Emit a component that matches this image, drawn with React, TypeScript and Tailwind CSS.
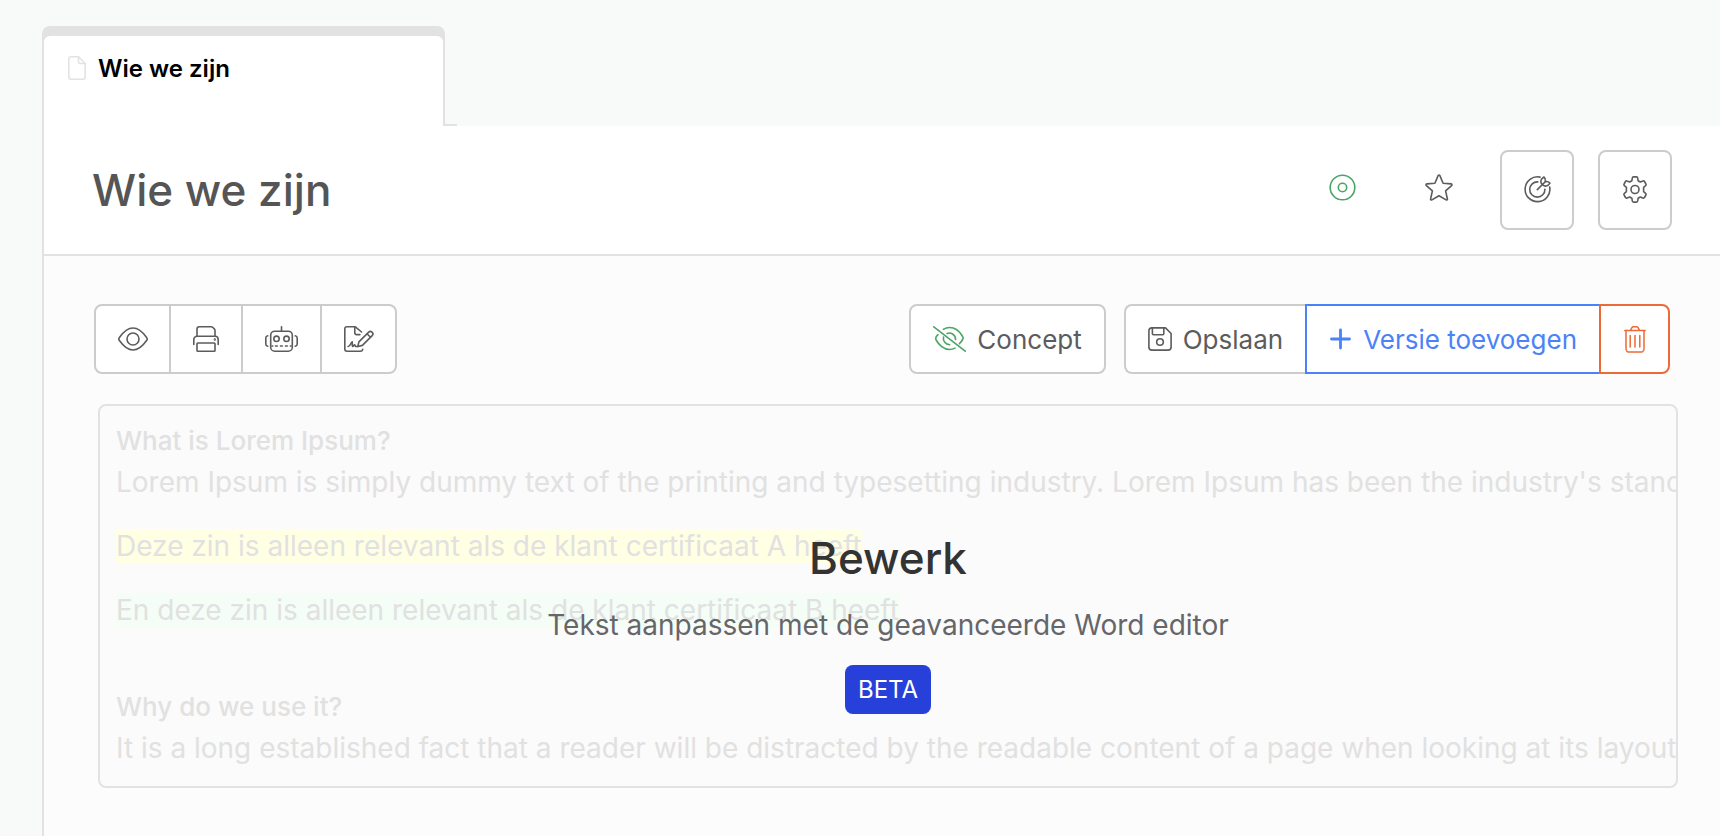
import type { ReactNode } from "react";
import { clsx } from "clsx";

type IconProps = {
  width: number;
  height: number;
  className?: string;
  strokeWidth?: number;
  children: ReactNode;
};

function Icon({ width, height, className, strokeWidth = 1.6, children }: IconProps) {
  return (
    <svg
      width={width}
      height={height}
      viewBox={`0 0 ${width} ${height}`}
      fill="none"
      stroke="currentColor"
      strokeWidth={strokeWidth}
      strokeLinecap="round"
      strokeLinejoin="round"
      className={clsx("shrink-0", className)}
      aria-hidden="true"
    >
      {children}
    </svg>
  );
}

function FileIcon() {
  return (
    <Icon width={18} height={24} className="text-[#e3e3e3]">
      <path d="M10.5.8H3A2.200 2.200 0 0 0 .8 3v18A2.200 2.200 0 0 0 3 23.200h12a2.200 2.200 0 0 0 2.200-2.200V7.500z" />
      <path d="M10.500.8V6A1.500 1.500 0 0 0 12 7.500h5.200" />
    </Icon>
  );
}

function StatusIcon() {
  return (
    <Icon width={27} height={27} className="text-[#4aa564]">
      <circle cx="13.5" cy="13.5" r="12.3" />
      <circle cx="13.5" cy="13.5" r="4.2" />
    </Icon>
  );
}

function StarIcon() {
  return (
    <Icon width={28} height={27}>
      <path d="M13.100 1.600c.4-.8 1.400-.8 1.800 0l3.200 7.600 7.900.7c.9.1 1.200 1.100.6 1.700l-6 5.300 1.800 8.100c.2.900-.6 1.300-1.300.9L14 21.700l-7.100 4.200c-.7.400-1.500-.1-1.300-.9l1.800-8.100-6-5.300c-.6-.6-.3-1.600.6-1.700l7.900-.7z" />
    </Icon>
  );
}

function GoalIcon() {
  return (
    <Icon width={27} height={27}>
      <path d="M16 1.100A12.400 12.400 0 1 0 25.700 11" />
      <path d="M13.800 5.900a7.600 7.600 0 1 0 7.100 7.300" />
      <path d="M13.300 13.600 21.500 5.500" />
      <path d="M18.300 8.400c-2.600-2.400-1.800-5.200 1.600-7.400 1.100.8 1.700 2.200 1.600 4.500" />
      <path d="M18.600 8.700c2.400 2.400 5.200 1.600 7.400-1.600-.8-1.200-2.200-1.700-4.500-1.600" />
    </Icon>
  );
}

function GearIcon() {
  return (
    <Icon width={26} height={27}>
      <circle cx="13" cy="13.5" r="4" />
      <path d="M11.500.9h3c.8 0 1.100.4 1.200 1.100l.4 2.700 2.200 1.300 2.600-1c.7-.3 1.300-.1 1.600.5l1.400 2.500c.4.6.3 1.200-.3 1.700l-2 1.700v4.200l2 1.700c.6.5.7 1.100.3 1.700l-1.400 2.500c-.3.6-.9.8-1.600.5l-2.600-1-2.200 1.300-.4 2.700c-.1.7-.4 1.100-1.200 1.100h-3c-.8 0-1.100-.4-1.200-1.100l-.4-2.700-2.200-1.300-2.600 1c-.7.3-1.300.1-1.600-.5L2.100 19c-.4-.6-.3-1.200.3-1.700l2-1.700v-4.200l-2-1.700C1.800 9.200 1.700 8.600 2.100 8l1.400-2.500c.3-.6.9-.8 1.600-.5l2.600 1 2.200-1.300.4-2.700c.1-.7.4-1.100 1.200-1.100z" />
    </Icon>
  );
}

function EyeIcon() {
  return (
    <Icon width={30} height={24}>
      <path d="M28.600 10.500c.7.9.7 2.100 0 3C26.200 16.900 21 23 15 23S3.800 16.900 1.400 13.500c-.7-.9-.7-2.100 0-3C3.800 7.100 9 1 15 1s11.200 6.100 13.600 9.500z" />
      <circle cx="15" cy="12" r="6" />
    </Icon>
  );
}

function PrintIcon() {
  return (
    <Icon width={26} height={26}>
      <path d="M4 10V3.100A2.300 2.300 0 0 1 6.300.8h11.900a2.500 2.500 0 0 1 1.700.7l1.400 1.400a2.500 2.500 0 0 1 .7 1.700V10" />
      <path d="M.8 18.500v-5A3.200 3.200 0 0 1 4 10.300h18a3.200 3.200 0 0 1 3.200 3.200v5" />
      <rect x="4" y="17" width="18" height="8.200" rx=".8" />
      <circle cx="21.800" cy="13.500" r=".4" fill="currentColor" />
    </Icon>
  );
}

function RobotIcon() {
  return (
    <Icon width={33} height={26}>
      <path d="M16.500.8V5" />
      <rect x="5.700" y="5.200" width="21.600" height="20" rx="4" />
      <circle cx="11.500" cy="12.800" r="2.700" />
      <circle cx="21.500" cy="12.800" r="2.700" />
      <path d="M7 20h.8M10.500 20h1.800M15.500 20h1.800M20.500 20h1.800M25.300 20h.8" />
      <path d="M2.700 9.800C1.400 10 .8 10.900.8 12v6c0 1.100.6 2 1.900 2.300M30.300 9.800c1.300.2 1.900 1.100 1.900 2.200v6c0 1.100-.6 2-1.900 2.300" />
    </Icon>
  );
}

function SignatureIcon() {
  return (
    <Icon width={30} height={26}>
      <path d="M17.500 6 11.700 1.100a1.400 1.400 0 0 0-.9-.3H3A2.200 2.200 0 0 0 .8 3v20A2.200 2.200 0 0 0 3 25.200h13.500c1.300 0 2-.8 2.200-1.900" />
      <path d="M10.800.8v6.100A1.700 1.700 0 0 0 12.500 8.600h3.400" />
      <path d="M4.200 20.500c2-.5 2.600-3.600 4-4.700.3 1.500-.3 3.700.4 4.700.7 0 1.200-1.700 2-1.700.6 0 .3 1.600 1.200 1.700h2" />
      <path d="m13.800 20.500 1.100-4.600L24.700 6.100a2.300 2.300 0 0 1 3.200 0l.3.300a2.300 2.300 0 0 1 0 3.200l-9.800 9.800zM23 7.800l3.500 3.500" />
    </Icon>
  );
}

function ConceptIcon() {
  return (
    <Icon width={33} height={26} className="text-[#4aa564]">
      <path d="m.8.8 31.400 24.400" />
      <path d="M10.300 3.400c1.900-1.200 4-1.900 6.200-1.900 6 0 10.900 5.100 13.200 9 .7 1 .7 2 0 3-.9 1.600-2.100 3.100-3.300 4.300" />
      <path d="M5 8.700C4.300 9.300 3.600 10.100 3.100 11c-.6 1-.6 2 0 3 2.300 4.200 7.400 9.500 13.400 9.500 1.900 0 3.700-.5 5.500-1.400" />
      <path d="M14 7.500c3.500-1.500 8.500.8 8.600 6M10.500 11c-.8 4 2 7.500 6.200 7.800" />
    </Icon>
  );
}

function SaveIcon() {
  return (
    <Icon width={24} height={24}>
      <path d="M4 .9h13.500l5.600 5.600V20a3.100 3.100 0 0 1-3.100 3.100H4A3.100 3.100 0 0 1 .9 20V4A3.100 3.100 0 0 1 4 .9z" />
      <path d="M4.400.9v5.900a1 1 0 0 0 1 1h9.400a1 1 0 0 0 1-1V.9" />
      <circle cx="12" cy="15" r="3.300" />
    </Icon>
  );
}

function PlusIcon() {
  return (
    <Icon width={22} height={22} strokeWidth={2.8}>
      <path d="M11.500 2v18M2.500 11h18" />
    </Icon>
  );
}

function TrashIcon() {
  return (
    <Icon width={22} height={27} strokeWidth={1.5}>
      <path d="M.8 4.500h20.400M6.500 4.300l1.300-2.500a2 2 0 0 1 1.700-1h3a2 2 0 0 1 1.700 1l1.300 2.500" />
      <path d="M2 4.500v18.200a3.400 3.400 0 0 0 3.400 3.400h11.200a3.400 3.400 0 0 0 3.400-3.400V4.500" />
      <path d="M6.200 9.500V21M11 9.500V21M15.800 9.500V21" />
    </Icon>
  );
}

const viewTools = [
  { label: "Bekijken", icon: <EyeIcon />, style: "w-[77px] rounded-l-lg" },
  { label: "Afdrukken", icon: <PrintIcon />, style: "-ml-0.5 w-[74px]" },
  { label: "Assistent", icon: <RobotIcon />, style: "-ml-0.5 w-[81px]" },
  { label: "Ondertekenen", icon: <SignatureIcon />, style: "-ml-0.5 w-[77px] rounded-r-lg" },
];

function PageTab() {
  return (
    <div className="flex items-end pl-[42px] pt-[26px]">
      <div className="h-[100px] w-[403px] rounded-t-lg border-x-2 border-[#e2e2e2] bg-[#e2e2e2] pt-[10px]">
        <a href="#" className="flex h-full gap-3 rounded-t-md bg-white pl-6 pt-[15px]">
          <span className="pt-[5px]">
            <FileIcon />
          </span>
          <span className="text-[24px] leading-[36px] font-semibold text-black">Wie we zijn</span>
        </a>
      </div>
      <div className="h-0.5 w-3 bg-[#e2e2e2]" />
    </div>
  );
}

function PageHeader() {
  const square =
    "flex h-20 w-[74px] items-center justify-center rounded-lg border-2 border-[#ccc] bg-white pb-0.5";

  return (
    <header className="flex items-center border-b-2 border-[#e2e2e2] bg-white py-6 pl-12 pr-12">
      <h1 className="text-[44px] leading-[56px] font-medium text-[#555]">Wie we zijn</h1>
      <div className="ml-auto flex items-center gap-6 text-[#5c5c5c]">
        <button type="button" aria-label="Status" className="flex w-[72px] justify-center pb-1.5">
          <StatusIcon />
        </button>
        <button type="button" aria-label="Favoriet" className="flex w-[74px] justify-center pb-1.5">
          <StarIcon />
        </button>
        <button type="button" aria-label="Doelen" className={square}>
          <GoalIcon />
        </button>
        <button type="button" aria-label="Instellingen" className={square}>
          <GearIcon />
        </button>
      </div>
    </header>
  );
}

function Toolbar() {
  const base = "flex h-[70px] items-center border-2 bg-white";

  return (
    <div className="flex items-center pl-[50px] pr-[50px] text-[26px] text-[#5c5c5c]">
      <div className="flex">
        {viewTools.map((tool) => (
          <button
            key={tool.label}
            type="button"
            aria-label={tool.label}
            className={clsx(base, "justify-center border-[#ccc]", tool.style)}
          >
            {tool.icon}
          </button>
        ))}
      </div>
      <button type="button" className={clsx(base, "ml-auto mr-[18px] gap-[11px] rounded-lg border-[#ccc] px-[22px]")}>
        <ConceptIcon />
        Concept
      </button>
      <div className="flex">
        <button type="button" className={clsx(base, "gap-[11px] rounded-l-lg border-r-0 border-[#ccc] px-[22px]")}>
          <SaveIcon />
          Opslaan
        </button>
        <button type="button" className={clsx(base, "gap-3 border-[#4c82f7] px-[22px] text-[#4c82f7]")}>
          <PlusIcon />
          Versie toevoegen
        </button>
        <button
          type="button"
          aria-label="Verwijderen"
          className={clsx(base, "-ml-0.5 w-[71px] justify-center rounded-r-lg border-[#ec6a37] text-[#ec6a37]")}
        >
          <TrashIcon />
        </button>
      </div>
    </div>
  );
}

function DocumentPreview() {
  return (
    <section className="relative ml-[54px] mr-[42px] mt-[30px] h-[384px] overflow-hidden rounded-lg border-2 border-[#e2e2e2] bg-[#fbfbfb]">
      <div className="px-4 pt-4 text-[28px] leading-[44px] whitespace-nowrap text-[#e1e1e1]">
        <h2 className="text-[26px] leading-[38px] font-medium">What is Lorem Ipsum?</h2>
        <p>
          Lorem Ipsum is simply dummy text of the printing and typesetting industry. Lorem Ipsum has been the
          industry's standard dummy text ever since the 1500s
        </p>
        <p className="mt-5">
          <span className="bg-[#ffffe3]">Deze zin is alleen relevant als de klant certificaat A heeft</span>
        </p>
        <p className="mt-5">
          <span className="bg-[#f4fef6]">En deze zin is alleen relevant als de klant certificaat B heeft</span>
        </p>
        <h2 className="mt-14 text-[26px] leading-[38px] font-medium">Why do we use it?</h2>
        <p>
          It is a long established fact that a reader will be distracted by the readable content of a page when
          looking at its layout. The point of using Lorem Ipsum
        </p>
      </div>
      {/* edit prompt lies over the faded document */}
      <a href="#" className="absolute inset-0 flex flex-col items-center pt-[124px]">
        <span className="text-[44px] leading-[56px] font-medium text-[#333]">Bewerk</span>
        <span className="mt-[17px] text-[28px] leading-[44px] text-[#666669]">
          Tekst aanpassen met de geavanceerde Word editor
        </span>
        <span className="mt-[18px] flex h-[49px] items-center rounded-lg bg-[#2740d9] px-[13px] text-[24px] text-white">
          BETA
        </span>
      </a>
    </section>
  );
}

export default function App() {
  return (
    <div className="flex min-h-screen flex-col bg-[#f8faf9] font-[Inter,sans-serif]">
      <PageTab />
      <main className="ml-[42px] grow border-l-2 border-[#e2e2e2] bg-[#fcfcfc]">
        <PageHeader />
        <div className="pt-12 pb-12">
          <Toolbar />
          <DocumentPreview />
        </div>
      </main>
    </div>
  );
}
